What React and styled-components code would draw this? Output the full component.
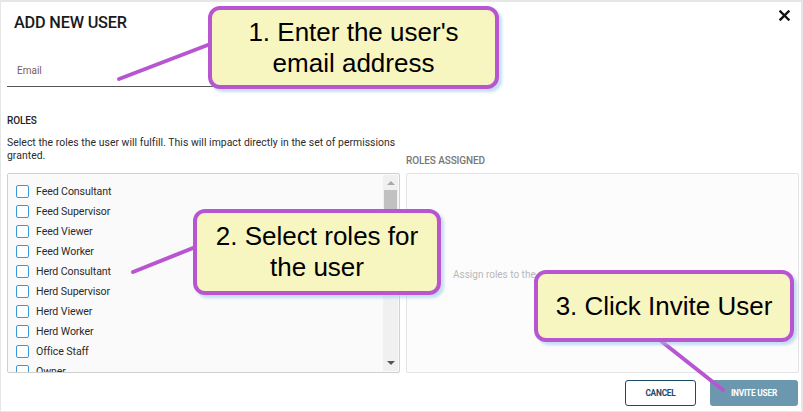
import React from "react";
import styled, { createGlobalStyle } from "styled-components";

const GlobalStyle = createGlobalStyle`
  html, body { margin: 0; padding: 0; background: #fff; }
  body { font-family: Roboto, "Liberation Sans", sans-serif; color: #222; }
  * { box-sizing: border-box; }
`;

const Modal = styled.div`
  position: relative;
  width: 803px;
  height: 412px;
  border: 1px solid #e6e6e6;
  border-top-width: 2px;
  border-right-width: 2px;
  background: #fff;
  display: flex;
  flex-direction: column;
  padding: 0 3px 0 6px;
  overflow: hidden;
`;

const Header = styled.div`
  display: flex;
  justify-content: space-between;
  align-items: center;
  height: 40px;
  padding: 0 8px 0 7px;
`;

const Title = styled.h1`
  margin: 0;
  font-size: 16.3px;
  font-weight: 500;
  letter-spacing: -0.2px;
  color: #1a1a1a;
`;

const Close = styled.button`
  border: none;
  background: none;
  padding: 0;
  width: 11px;
  height: 11px;
  display: flex;
  align-items: center;
  justify-content: center;
  margin-top: -14px;
  cursor: pointer;
`;

const Field = styled.div`
  width: 393px;
  height: 45px;
  border-bottom: 1px solid #555;
  display: flex;
  align-items: flex-end;
  padding: 0 0 10px 10px;
`;

const FieldLabel = styled.span`
  font-size: 10px;
  color: #7b5d58;
`;

const Roles = styled.div`
  display: grid;
  grid-template-columns: 393px 393px;
  column-gap: 6px;
  margin-top: 28px;
`;

const Column = styled.div`
  display: flex;
  flex-direction: column;
  justify-content: flex-end;
`;

const SectionTitle = styled.div`
  font-size: 10px;
  font-weight: 500;
  color: ${(p) => (p.$muted ? "#777" : "#222")};
  margin-bottom: ${(p) => p.$gap}px;
  letter-spacing: -0.1px;
`;

const Description = styled.p`
  margin: 0 0 11px;
  font-size: 10.4px;
  line-height: 13px;
  color: #2b2b2b;
  letter-spacing: 0.04px;
`;

const Box = styled.div`
  height: 200px;
  border: 1px solid ${(p) => (p.$light ? "#e4e4e4" : "#cfcfcf")};
  border-radius: 2px;
  background: ${(p) => (p.$light ? "#fcfcfc" : "#fafafa")};
  display: flex;
  overflow: hidden;
`;

const List = styled.ul`
  list-style: none;
  margin: 0;
  padding: 7px 0 0 8px;
  flex: 1;
  overflow: hidden;
`;

const Item = styled.li`
  display: flex;
  align-items: center;
  height: 20px;
  gap: 7px;
  font-size: 10.6px;
  letter-spacing: -0.1px;
  color: #2a2a2a;
`;

const Check = styled.span`
  width: 13px;
  height: 13px;
  border: 1.5px solid #3a98d8;
  border-radius: 2px;
  background: #fff;
  flex: none;
`;

const ScrollTrack = styled.div`
  width: 15px;
  margin: 1px 1px 1px 0;
  background: #f0f0f0;
  display: flex;
  flex-direction: column;
  align-items: center;
`;

const Arrow = styled.div`
  width: 0;
  height: 0;
  border-left: 4px solid transparent;
  border-right: 4px solid transparent;
  ${(p) =>
    p.$up
      ? "border-bottom: 4px solid #a8a8a8; margin: 6px 0 5px;"
      : "border-top: 4px solid #555; margin: auto 0 6px;"}
`;

const Thumb = styled.div`
  width: 13px;
  height: 105px;
  background: #c1c1c1;
`;

const Placeholder = styled.div`
  font-size: 10px;
  color: #b8b8b8;
  align-self: center;
  padding-left: 46px;
  margin-top: 3px;
`;

const Footer = styled.div`
  display: flex;
  justify-content: flex-end;
  gap: 14px;
  margin-top: 7px;
`;

const Button = styled.button`
  height: 26px;
  width: ${(p) => p.$w}px;
  border-radius: 3px;
  font-family: Roboto, "Liberation Sans", sans-serif;
  font-size: 8.3px;
  font-weight: 700;
  letter-spacing: -0.2px;
  border: ${(p) => (p.$primary ? "none" : "1px solid #1d4a66")};
  background: ${(p) => (p.$primary ? "#6b98ae" : "#fff")};
  color: ${(p) => (p.$primary ? "#fff" : "#1d4a66")};
  cursor: pointer;
`;

const Callout = styled.div`
  position: absolute;
  left: ${(p) => p.$x}px;
  top: ${(p) => p.$y}px;
  width: ${(p) => p.$w}px;
  height: ${(p) => p.$h}px;
  border: 4px solid #b856d2;
  border-radius: 12px;
  background: #f7f5c0;
  box-shadow: 3px 3px 3px rgba(160, 200, 235, 0.6);
  display: flex;
  align-items: center;
  justify-content: center;
  text-align: center;
  font-family: "Liberation Sans", Arial, sans-serif;
  font-size: 26px;
  line-height: 31px;
  color: #000;
  z-index: 3;
`;

const Pointers = styled.svg`
  position: absolute;
  left: 0;
  top: 0;
  width: 803px;
  height: 412px;
  pointer-events: none;
  z-index: 2;
`;

const roles = [
  "Feed Consultant",
  "Feed Supervisor",
  "Feed Viewer",
  "Feed Worker",
  "Herd Consultant",
  "Herd Supervisor",
  "Herd Viewer",
  "Herd Worker",
  "Office Staff",
  "Owner",
];

export default function App() {
  return (
    <>
      <GlobalStyle />
      <Modal>
        <Header>
          <Title>ADD NEW USER</Title>
          <Close aria-label="close">
            <svg width="11" height="11" viewBox="0 0 11 11">
              <path d="M1.5 1.5 L9.5 9.5 M9.5 1.5 L1.5 9.5" stroke="#111" strokeWidth="2.4" strokeLinecap="square" />
            </svg>
          </Close>
        </Header>
        <Field>
          <FieldLabel>Email</FieldLabel>
        </Field>
        <Roles>
          <Column>
            <SectionTitle $gap={10}>ROLES</SectionTitle>
            <Description>
              Select the roles the user will fulfill. This will impact directly in the set of permissions granted.
            </Description>
            <Box>
              <List>
                {roles.map((r) => (
                  <Item key={r}>
                    <Check />
                    {r}
                  </Item>
                ))}
              </List>
              <ScrollTrack>
                <Arrow $up />
                <Thumb />
                <Arrow />
              </ScrollTrack>
            </Box>
          </Column>
          <Column>
            <SectionTitle $muted $gap={7}>ROLES ASSIGNED</SectionTitle>
            <Box $light>
              <Placeholder>Assign roles to the user</Placeholder>
            </Box>
          </Column>
        </Roles>
        <Footer>
          <Button $w={71}>CANCEL</Button>
          <Button $primary $w={88}>INVITE USER</Button>
        </Footer>

        <Pointers viewBox="0 0 803 412">
          <g stroke="#b856d2" strokeWidth="4" strokeLinecap="round">
            <line x1="118" y1="77" x2="212" y2="41" />
            <line x1="132" y1="270" x2="197" y2="244" />
            <line x1="660" y1="339" x2="722" y2="388" />
          </g>
        </Pointers>
        <Callout $x={207} $y={4} $w={291} $h={83}>
          1. Enter the user's
          <br />
          email address
        </Callout>
        <Callout $x={192} $y={207} $w={248} $h={86}>
          2. Select roles for
          <br />
          the user
        </Callout>
        <Callout $x={533} $y={268} $w={260} $h={72}>
          3. Click Invite User
        </Callout>
      </Modal>
    </>
  );
}
